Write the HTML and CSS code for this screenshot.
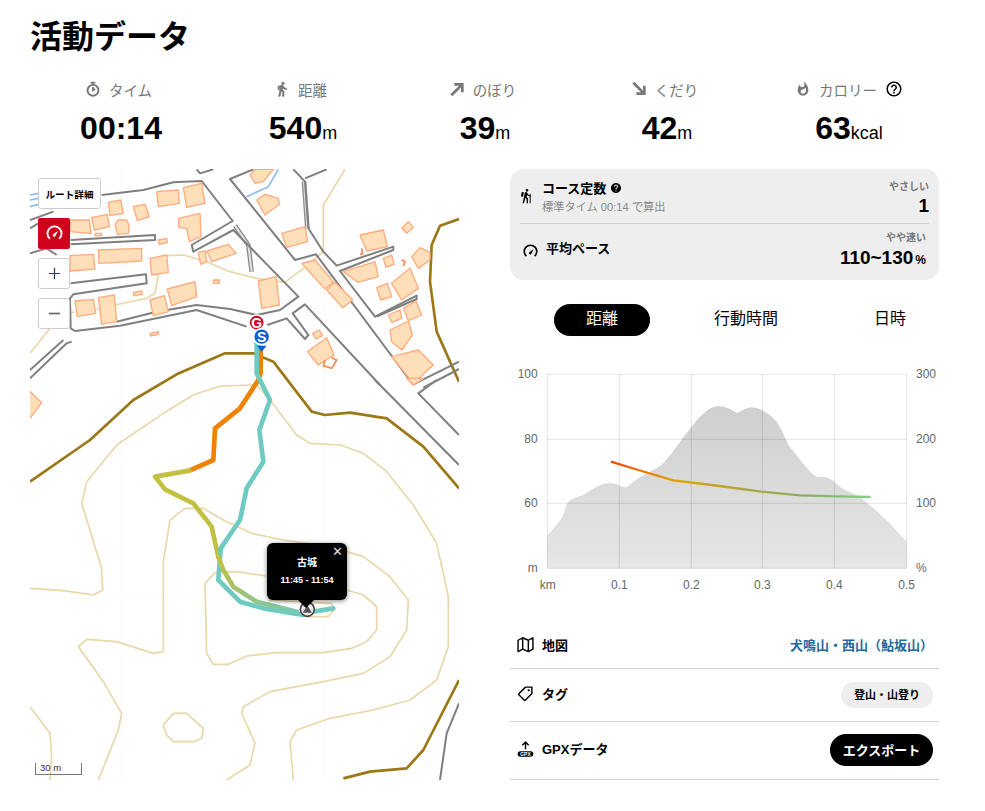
FILE: index.html
```html
<!DOCTYPE html>
<html lang="ja">
<head>
<meta charset="utf-8">
<title>活動データ</title>
<link rel="stylesheet" href="styles.css">
</head>
<body>
<main class="page">
  <h1 class="title">活動データ</h1>
  <section class="stats">
    <div class="stat">
      <div class="stat-label"><svg class="ic" viewBox="0 0 24 24"><path class="ic-line" d="M8.5 2.5h7M12 2.5v4M12 9v5l3-2"/><circle class="ic-line" cx="12" cy="14" r="8.2"/></svg><span>タイム</span></div>
      <div class="stat-value">00:14</div>
    </div>
    <div class="stat">
      <div class="stat-label"><svg class="ic" viewBox="0 0 24 24"><path class="ic-fill ic-bold" d="M13.5 5.5c1.1 0 2-.9 2-2s-.9-2-2-2-2 .9-2 2 .9 2 2 2zM9.8 8.9L7 23h2.1l1.8-8 2.1 2v6h2v-7.5l-2.1-2 .6-3C14.8 12 16.8 13 19 13v-2c-1.9 0-3.5-1-4.3-2.4l-1-1.6c-.4-.6-1-1-1.7-1-.3 0-.5.1-.8.1L6 8.3V13h2V9.6l1.8-.7"/></svg><span>距離</span></div>
      <div class="stat-value">540<small>m</small></div>
    </div>
    <div class="stat">
      <div class="stat-label"><svg class="ic" viewBox="0 0 24 24"><path class="ic-fill" d="M8 3h14v14h-4V9.8L5 23l-3-3L15 7H8z"/></svg><span>のぼり</span></div>
      <div class="stat-value">39<small>m</small></div>
    </div>
    <div class="stat">
      <div class="stat-label"><svg class="ic" viewBox="0 0 24 24"><path class="ic-fill" d="M8 21h14V7h-4v7.2L5 1 2 4l13 13H8z"/></svg><span>くだり</span></div>
      <div class="stat-value">42<small>m</small></div>
    </div>
    <div class="stat">
      <div class="stat-label stat-label-last"><svg class="ic" viewBox="0 0 24 24"><path class="ic-fill" d="M13.5.67s.74 2.65.74 4.8c0 2.06-1.35 3.73-3.41 3.73-2.07 0-3.63-1.67-3.63-3.73l.03-.36C5.21 7.51 4 10.62 4 14c0 4.42 3.58 8 8 8s8-3.58 8-8C20 8.61 17.41 3.8 13.5.67zM11.71 19c-1.78 0-3.22-1.4-3.22-3.14 0-1.62 1.05-2.76 2.81-3.12 1.77-.36 3.6-1.21 4.62-2.58.39 1.29.59 2.65.59 4.04 0 2.65-2.15 4.8-4.8 4.8z"/></svg><span>カロリー</span><svg class="ic-help" viewBox="0 0 24 24"><path d="M11 18h2v-2h-2v2zm1-16C6.48 2 2 6.48 2 12s4.48 10 10 10 10-4.48 10-10S17.52 2 12 2zm0 18c-4.41 0-8-3.59-8-8s3.59-8 8-8 8 3.59 8 8-3.59 8-8 8zm0-14c-2.21 0-4 1.79-4 4h2c0-1.1.9-2 2-2s2 .9 2 2c0 2-3 1.75-3 5h2c0-2.25 3-2.5 3-5 0-2.21-1.79-4-4-4z"/></svg></div>
      <div class="stat-value">63<small>kcal</small></div>
    </div>
  </section>

  <section class="columns">
    <div class="map">
      <svg class="map-svg" viewBox="0 0 1287 1833">
        <defs>
          <linearGradient id="fade" gradientUnits="userSpaceOnUse" x1="565" y1="530" x2="800" y2="695">
            <stop offset="0" stop-color="#c2c040"/><stop offset=".45" stop-color="#9cc47a"/><stop offset="1" stop-color="#74c9b4"/>
          </linearGradient>
        </defs>
        <path class="seam" d="M273 0V1833M885 0V1833M0 1288H1287"/>
        <g transform="translate(0,-12)">
          <g class="contour">
            <path d="M945 13L880 120V260L820 310L765 352L680 340L600 320L530 290L460 270L410 272"/>
            <path d="M385 330L375 385L350 400L255 420"/>
            <path d="M60 490L0 565"/>
            <path d="M120 442H135M197 432H205"/>
          </g>
          <path class="contour-main" d="M1287 162L1230 182L1205 240L1200 350L1220 500L1287 650"/>
          <g class="alley">
            <path d="M615 182L655 240L665 320"/>
            <path d="M822 50L832 190"/>
          </g>
          <g class="alley-in">
            <path d="M615 182L655 240L665 320"/>
            <path d="M822 50L832 190"/>
          </g>
          <path class="stream" d="M745 13L715 65L650 95M0 90L25 85M0 105L25 100M0 125L25 118"/>
          <g class="road">
            <path d="M215 90L340 75L430 52L515 48L608 168L485 240L490 260L610 195L805 395L750 435L680 450L600 432L500 420L380 440L260 470"/>
            <path d="M122 225L375 210L375 225L122 238"/>
            <path d="M122 355L348 328L350 355L130 388L120 400L122 490L135 498L270 482L500 435L650 485M712 480L770 460L825 522L835 510L788 445L825 418L1050 660"/>
            <path d="M670 13L600 42L795 285L858 268L1150 660"/>
            <path d="M790 13L825 50L835 190L880 260L920 302L1090 245L1090 255L930 318L1035 455L1160 392L1160 402L1040 455"/>
            <path d="M825 40L890 13M500 13L510 25L550 13"/>
            <path d="M0 165L70 140M0 190L25 175"/>
            <path d="M0 265L50 250L80 270"/>
            <path d="M0 640L110 535L125 530M0 615L100 525"/>
            <path d="M1150 658L1287 590M1180 668L1287 612"/>
          </g>
          <g class="bld">
            <path d="M380 80L445 75L448 115L385 125Z"/>
            <path d="M460 68L515 55L525 115L470 127Z"/>
            <path d="M445 160L510 145L513 215L478 230L470 190L447 188Z"/>
            <path d="M310 125L345 118L358 155L322 167Z"/>
            <path d="M235 112L272 105L280 145L240 152Z"/>
            <path d="M185 158L232 148L238 185L193 195Z"/>
            <path d="M255 178L265 165L290 165L297 180L295 205L262 208Z"/>
            <path d="M120 165L178 165L183 205L120 200Z"/>
            <path d="M205 255L335 250L335 288L207 295Z"/>
            <path d="M120 272L190 268L195 312L120 318Z"/>
            <path d="M360 280L410 270L415 322L365 330Z"/>
            <path d="M505 262L525 258L530 290L512 298Z"/>
            <path d="M530 258L595 238L618 265L545 290Z"/>
            <path d="M412 372L495 350L500 395L425 422Z"/>
            <path d="M360 405L403 392L415 440L370 452Z"/>
            <path d="M135 408L190 403L197 445L142 455Z"/>
            <path d="M205 398L253 390L260 470L215 478Z"/>
            <path d="M685 348L738 335L748 420L695 430Z"/>
            <path d="M755 205L825 185L833 230L770 247Z"/>
            <path d="M680 105L705 88L745 100L748 118L705 150Z"/>
            <path d="M660 30L675 13L730 13L700 50L675 55Z"/>
            <path d="M815 295L855 285L910 350L885 372Z"/>
            <path d="M890 375L915 352L968 405L938 428Z"/>
            <path d="M990 210L1060 195L1072 245L1010 258Z"/>
            <path d="M1115 190L1135 170L1150 187L1130 205Z"/>
            <path d="M1145 275L1170 248L1200 262L1200 285L1165 310Z"/>
            <path d="M1060 280L1085 270L1092 298L1068 306Z"/>
            <path d="M940 320L1035 290L1045 335L985 352Z"/>
            <path d="M1040 368L1072 355L1085 395L1052 405Z"/>
            <path d="M1085 355L1140 310L1165 370L1115 405Z"/>
            <path d="M1120 430L1158 408L1175 450L1135 467Z"/>
            <path d="M1075 450L1110 435L1115 460L1085 472Z"/>
            <path d="M1080 495L1135 468L1147 510L1115 555L1085 530Z"/>
            <path d="M1085 575L1165 555L1210 600L1150 655Z"/>
            <path d="M832 560L890 518L912 570L865 600Z"/>
            <path d="M848 505L868 495L878 512L858 522Z"/>
            <path d="M310 382L335 378L337 388L312 392Z"/>
            <path d="M550 345L568 345L568 355L550 355Z"/>
            <path d="M360 505L385 500L385 508L362 513Z"/>
            <path d="M385 225L410 220L412 232L388 238Z"/>
            <path d="M195 205L215 205L215 212L195 212Z"/>
          </g>
          <path class="bld-line" d="M885 585L880 602L905 610L920 585L905 578M1115 285L1125 290L1120 303M995 250L998 266L990 268"/>
        </g>
        <g transform="translate(0,633)">
          <g class="contour">
            <path d="M0 625L100 632L190 645L218 630L215 565L155 370L170 305L260 195L400 100L490 45L570 18L680 15L720 60L800 165L840 190L930 195L1000 220L1070 275L1150 375L1220 490L1255 650V800L1220 900L1140 960L1030 990L900 1015L800 1050L780 1085L790 1200"/>
            <path d="M205 1200L265 1050L275 1000L220 905L145 800L170 778L260 785L370 820L400 815V545L420 420L465 385L520 385L580 420L665 460L760 480L900 500L1000 530L1080 590L1135 660L1130 750L1080 830L1000 880L880 905L720 935L640 980L635 1000L675 1090L660 1155L590 1200"/>
            <path d="M720 590L620 575L555 578L525 610L530 820L550 853H595L650 828L740 818H880L965 805L1010 785L1040 750V680L1000 645L950 630"/>
            <path d="M715 660L905 670L912 690L895 710H830"/>
            <path d="M430 1000H470L520 1045L515 1075L490 1085H430L410 1065L400 1035Z"/>
            <path d="M0 980L60 1060L65 1130L60 1200"/>
          </g>
          <path class="contour-main" d="M0 305L180 180L310 60L440 -17L585 -80H670L730 -55L845 95L885 105L960 98L1070 115L1180 200L1287 325"/>
          <path class="contour-main" d="M940 1195L1020 1175L1130 1165L1180 1110L1287 900"/>
          <g class="road">
            <path d="M1035 0L1287 255M1220 0L1165 40L1287 165"/>
            <path d="M1287 970L1250 1060L1230 1200"/>
          </g>
          <g class="bld">
            <path d="M-10 25L35 68L0 115H-10Z"/>
            <path d="M1130 -5H1180L1150 15Z"/>
          </g>
          <path class="track track-orange" d="M692 -100V-20L685 0L630 85L555 145L550 240L478 272"/>
          <path class="track track-yellow" d="M478 272L375 290L405 328L490 370L545 440L565 530"/>
          <path class="track track-teal" d="M680 -115V-20L720 60L688 150L700 245L650 325L630 420L572 505L565 600L630 665L700 685L820 705M850 695L910 685"/>
          <path class="track track-fade" d="M565 530L580 570L610 620L680 665L800 695"/>
          <circle class="peak" cx="832" cy="688" r="21"/>
          <path class="peak-mark" d="M818 698L832 676L846 698Z"/>
        </g>
        <g class="pin">
          <circle class="pin-g" cx="680" cy="461" r="23"/>
          <text class="pin-text" x="680" y="476">G</text>
          <path class="pin-tail-s" d="M680 530L710 530L695 548Z"/>
          <circle class="pin-s" cx="695" cy="503" r="24"/>
          <text class="pin-text" x="695" y="518">S</text>
        </g>
      </svg>

      <div class="map-controls">
        <button class="ctl ctl-route">ルート詳細</button>
        <button class="ctl ctl-red"><svg class="ctl-gauge" viewBox="0 0 24 24"><path class="gauge-line" d="M5.5 19.5A10 10 0 1 1 18.5 19.5"/><path class="gauge-needle" d="M17 8L10.6 12.8A2 2 0 1 0 13.4 15.4Z"/></svg></button>
        <button class="ctl ctl-zoom"><svg viewBox="0 0 16 16" class="zoom-ic"><path d="M8 1V15M1 8H15"/></svg></button>
        <button class="ctl ctl-zoom"><svg viewBox="0 0 16 16" class="zoom-ic zoom-minus"><path d="M1 8H15"/></svg></button>
      </div>

      <div class="popup">
        <span class="popup-close">✕</span>
        <div class="popup-name">古城</div>
        <div class="popup-time">11:45 - 11:54</div>
      </div>
      <div class="scale">30 m</div>
    </div>

    <div class="side">
      <div class="card">
        <div class="card-row card-row-course">
          <svg class="card-ic" viewBox="0 0 24 24"><path d="M13.5 5.5c1.1 0 2-.9 2-2s-.9-2-2-2-2 .9-2 2 .9 2 2 2zM17.5 10.78c-1.23-.37-2.22-1.17-2.8-2.18l-1-1.6c-.41-.65-1.11-1-1.84-1-.78 0-1.59.5-1.78 1.44S7 23 7 23h2.1l1.8-8 2.1 2v6h2v-7.5l-2.1-2 .6-3c1 1.15 2.41 2.01 4 2.34V23H19V9h-1.5v1.78zM7.43 13.13l-2.12-.41c-.54-.11-.9-.63-.79-1.17l.76-3.93c.21-1.08 1.26-1.79 2.34-1.58l1.16.23-1.35 6.86z"/></svg>
          <div class="card-main">
            <div class="card-title">コース定数<svg class="card-help" viewBox="0 0 24 24"><path d="M12 2C6.48 2 2 6.48 2 12s4.48 10 10 10 10-4.48 10-10S17.52 2 12 2zm1 17h-2v-2h2v2zm2.07-7.75l-.9.92C13.45 12.9 13 13.5 13 15h-2v-.5c0-1.1.45-2.1 1.17-2.83l1.24-1.26c.37-.36.59-.86.59-1.41 0-1.1-.9-2-2-2s-2 .9-2 2H8c0-2.21 1.79-4 4-4s4 1.79 4 4c0 .88-.36 1.68-.93 2.25z"/></svg></div>
            <div class="card-sub">標準タイム 00:14 で算出</div>
          </div>
          <div class="card-right">
            <div class="card-hint">やさしい</div>
            <div class="card-num">1</div>
          </div>
        </div>
        <div class="card-row card-row-pace">
          <svg class="card-ic card-ic-gauge" viewBox="0 0 24 24"><path class="gauge-dark" d="M5.5 19.5A10 10 0 1 1 18.5 19.5"/><path d="M17 8L10.6 12.8A2 2 0 1 0 13.4 15.4Z"/></svg>
          <div class="card-main"><div class="card-title">平均ペース</div></div>
          <div class="card-right">
            <div class="card-hint">やや速い</div>
            <div class="card-num">110~130<small>%</small></div>
          </div>
        </div>
      </div>

      <nav class="tabs">
        <span class="tab tab-active">距離</span>
        <span class="tab">行動時間</span>
        <span class="tab">日時</span>
      </nav>

      <svg class="chart" viewBox="0 0 1320 720">
        <defs>
          <linearGradient id="elev" x1="0" y1="0" x2="0" y2="1">
            <stop offset="0" stop-color="#cfcfcf"/><stop offset="1" stop-color="#e6e6e6"/>
          </linearGradient>
          <linearGradient id="pace" gradientUnits="userSpaceOnUse" x1="318" y1="0" x2="1097" y2="0">
            <stop offset="0" stop-color="#f2460a"/><stop offset=".24" stop-color="#e0a200"/><stop offset=".5" stop-color="#b0a533"/><stop offset=".75" stop-color="#86ae62"/><stop offset="1" stop-color="#84d088"/>
          </linearGradient>
        </defs>
        <path class="elev" d="M127 527L150 500L168 478L177 460L185 432L195 420L210 413L235 405L255 392L275 380L295 372L315 369L335 373L350 380L365 382L380 370L400 355L435 335L470 315L500 280L540 225L580 175L610 148L625 141L640 138L655 140L670 145L697 159L715 149L735 142L755 144L770 150L795 165L815 185L830 210L850 255L890 305L915 335L935 351L965 352L985 362L1010 385L1060 408L1100 440L1150 485L1205 545V625H127Z"/>
        <path class="grid" d="M127 43H1205M127 238H1205M127 430H1205M127 625H1205M127 43V625M343 43V625M559 43V625M772 43V625M988 43V625M1205 43V625"/>
        <path class="pace" d="M318 305L400 330L505 361L620 375L770 395L885 406L1000 409L1097 411"/>
        <g class="axis">
          <text class="end" x="98" y="53">100</text>
          <text class="end" x="98" y="248">80</text>
          <text class="end" x="98" y="440">60</text>
          <text class="end" x="98" y="635">m</text>
          <text x="1233" y="53">300</text>
          <text x="1233" y="248">200</text>
          <text x="1233" y="440">100</text>
          <text x="1233" y="635">%</text>
          <text class="mid" x="128" y="687">km</text>
          <text class="mid" x="343" y="687">0.1</text>
          <text class="mid" x="559" y="687">0.2</text>
          <text class="mid" x="772" y="687">0.3</text>
          <text class="mid" x="988" y="687">0.4</text>
          <text class="mid" x="1205" y="687">0.5</text>
        </g>
      </svg>

      <div class="info info-map">
        <div class="info-label"><svg class="info-ic" viewBox="0 0 24 24"><path class="info-line" d="M1.5 6V22L8 18.5L16 22L22.5 18.5V2.5L16 6L8 2.5ZM8 2.5V18.5M16 6V22"/></svg>地図</div>
        <a class="info-link">犬鳴山・西山（鮎坂山）</a>
      </div>
      <div class="info info-tag">
        <div class="info-label"><svg class="info-ic" viewBox="0 0 24 24"><path class="info-line" d="M2.6 12.3L12 3H21V12L11.7 21.4A1 1 0 0 1 10.3 21.4L2.6 13.7A1 1 0 0 1 2.6 12.3Z"/><circle cx="16.5" cy="7.5" r="1.6"/></svg>タグ</div>
        <span class="chip">登山・山登り</span>
      </div>
      <div class="info info-gpx">
        <div class="info-label"><svg class="info-ic" viewBox="0 0 24 24"><path class="info-line" d="M12 13V3M7.5 7.5L12 3L16.5 7.5"/><rect x="1" y="16" width="22" height="7.5" rx="3.7"/><text class="gpx-text" x="12" y="22.3">GPX</text></svg>GPXデータ</div>
        <button class="export">エクスポート</button>
      </div>
    </div>
  </section>
</main>
</body>
</html>
```

FILE: styles.css
```css
* { box-sizing: border-box; }
html, body { margin: 0; padding: 0; background: #fff; }
body {
  font-family: "Liberation Sans", "Noto Sans CJK JP", sans-serif;
  color: #000;
}
.page { width: 985px; height: 811px; padding: 18px 45px 0 30px; overflow: hidden; }
.title { margin: 0; font-size: 32px; line-height: 38px; font-weight: 700; }

.stats { display: grid; grid-template-columns: repeat(5, 182px); margin-top: 22px; }
.stat { display: flex; flex-direction: column; align-items: center; }
.stat-label { display: flex; align-items: center; gap: 8px; height: 22px; padding-right: 5px; font-size: 14.5px; color: #777; }
.stat-label-last { padding-right: 0; }
.ic { width: 16px; height: 16px; }
.ic-line { fill: none; stroke: #777; stroke-width: 2.8; }
.ic-fill { fill: #777; }
.ic-bold { stroke: #777; stroke-width: 1; }
.ic-help { width: 18px; height: 18px; fill: #000; }
.stat-value { margin-top: 9px; font-size: 32px; line-height: 38px; font-weight: 700; }
.stat-value small { font-size: 18px; font-weight: 400; }

.columns { display: flex; gap: 51px; margin-top: 17px; }

.map { position: relative; width: 429px; height: 611px; border-radius: 12px; overflow: hidden; flex: none; background: #fff; }
.map-svg { display: block; width: 429px; height: 611px; }
.seam { fill: none; stroke: #fafafa; stroke-width: 3; }
.contour path { fill: none; stroke: #e9d7aa; stroke-width: 5; stroke-linejoin: round; }
.contour-main { fill: none; stroke: #9c7716; stroke-width: 8; stroke-linejoin: round; }
.road path { fill: none; stroke: #7f7f7f; stroke-width: 6; stroke-linejoin: round; }
.alley path { fill: none; stroke: #8c8c8c; stroke-width: 14; }
.alley-in path { fill: none; stroke: #e4e4e4; stroke-width: 6; }
.stream { fill: none; stroke: #8cbcf0; stroke-width: 5; }
.bld path { fill: #ffdfb9; stroke: #ffab7c; stroke-width: 4; stroke-linejoin: round; }
.bld-line { fill: none; stroke: #f58a52; stroke-width: 5; }
.track { fill: none; stroke-width: 14; stroke-linejoin: round; stroke-linecap: round; }
.track-orange { stroke: #ef8200; }
.track-yellow { stroke: #c2c040; }
.track-teal { stroke: #6fcac1; }
.track-fade { stroke: url(#fade); }
.peak { fill: #e9e9e9; stroke: #444; stroke-width: 5; }
.peak-mark { fill: #555; }
.pin-g { fill: #cf0a2c; stroke: #fff; stroke-width: 5; }
.pin-s { fill: #0d5fd3; stroke: #fff; stroke-width: 5; }
.pin-tail-s { fill: #0d5fd3; }
.pin-text { font-size: 42px; font-weight: 700; fill: #fff; text-anchor: middle; }

.map-controls { position: absolute; left: 8px; top: 9px; display: flex; flex-direction: column; align-items: flex-start; gap: 9px; }
.ctl { display: flex; align-items: center; justify-content: center; padding: 0; background: #fff; border: 1px solid #ccc; border-radius: 3px; font-family: inherit; color: #000; }
.ctl-route { width: 63px; height: 31px; font-size: 9.6px; font-weight: 700; white-space: nowrap; }
.ctl-red { width: 32px; height: 31px; background: #d0021b; border: none; border-radius: 2px; }
.ctl-gauge { width: 17px; height: 17px; }
.gauge-line { fill: none; stroke: #fff; stroke-width: 2.6; }
.gauge-needle { fill: #fff; }
.ctl-zoom { width: 32px; height: 31px; }
.zoom-ic { width: 13px; height: 13px; }
.zoom-ic path { fill: none; stroke: #2c3e5c; stroke-width: 1.5; }
.zoom-minus path { stroke: #666; stroke-width: 2; }

.popup { position: absolute; left: 237px; top: 374px; width: 80px; height: 57px; background: #000; border-radius: 6px; color: #fff; text-align: center; box-shadow: 0 1px 5px rgba(0,0,0,.5); font-weight: 700; }
.popup::after { content: ""; position: absolute; left: 31px; top: 57px; border: 8px solid transparent; border-top: 8px solid #000; border-bottom: 0; }
.popup-close { position: absolute; right: 4px; top: 2px; font-size: 13px; line-height: 14px; color: #ddd; font-weight: 400; }
.popup-name { margin-top: 13px; font-size: 10px; line-height: 14px; }
.popup-time { margin-top: 4px; font-size: 9px; line-height: 13px; }

.scale { position: absolute; left: 5px; bottom: 5px; width: 47px; height: 12px; border: 1px solid #777; border-top: none; font-size: 9.5px; line-height: 10px; padding-left: 4px; color: #333; }

.side { width: 429px; flex: none; }
.card { background: #eee; border-radius: 14px; height: 111px; padding: 0 10px; }
.card-row { display: flex; align-items: center; }
.card-row-course { height: 55px; border-bottom: 1px solid #d2d2d2; }
.card-row-pace { height: 56px; }
.card-ic { width: 16px; height: 18px; margin-right: 8px; flex: none; margin-left: -2px; }
.card-ic-gauge { width: 15px; height: 15px; margin: 0 8px 2px 3px; }
.gauge-dark { fill: none; stroke: #000; stroke-width: 2.6; }
.card-main { flex: 1; }
.card-title { display: flex; align-items: center; gap: 4px; font-size: 13px; line-height: 17px; font-weight: 700; }
.card-row-course .card-title { margin-top: 1px; }
.card-row-pace .card-title { margin-top: -7px; }
.card-help { width: 12px; height: 12px; }
.card-sub { font-size: 11.2px; line-height: 14px; margin-top: 3px; color: #888; }
.card-right { text-align: right; }
.card-hint { font-size: 10px; line-height: 12px; color: #777; font-weight: 700; }
.card-num { font-size: 19px; line-height: 22px; font-weight: 700; margin-top: 2px; }
.card-row-course .card-right { margin-top: 5px; }
.card-row-pace .card-right { margin-top: -2px; padding-right: 3px; }
.card-row-pace .card-num { margin-top: 3px; }
.card-num small { font-size: 12px; margin-left: 2px; }

.tabs { display: flex; gap: 48px; padding-left: 44px; margin-top: 24px; }
.tab { width: 96px; height: 32px; line-height: 30px; border-radius: 16px; text-align: center; font-size: 16px; white-space: nowrap; }
.tab-active { background: #000; color: #fff; }

.chart { display: block; width: 440px; height: 240px; margin: 24px 0 -10px -5px; }
.grid { fill: none; stroke: rgba(0,0,0,.11); stroke-width: 3; }
.elev { fill: url(#elev); }
.pace { fill: none; stroke: url(#pace); stroke-width: 7; stroke-linejoin: round; }
.axis text { font-size: 36px; fill: #666; }
.axis .end { text-anchor: end; }
.axis .mid { text-anchor: middle; }

.info { display: flex; align-items: center; justify-content: space-between; border-bottom: 1px solid #d2d2d2; padding-left: 7px; }
.info-map { height: 49px; margin-top: 30px; padding-right: 6px; }
.info-tag { height: 53px; padding-right: 6px; }
.info-gpx { height: 58px; padding-right: 6px; }
.info-label { display: flex; align-items: center; gap: 8px; font-size: 13px; font-weight: 700; }
.info-tag .info-label { margin-bottom: 3px; }
.info-gpx .info-label { margin-bottom: 4px; }
.info-ic { width: 17px; height: 17px; flex: none; }
.info-line { fill: none; stroke: #000; stroke-width: 2; stroke-linejoin: round; }
.gpx-text { font-size: 7px; font-weight: 700; fill: #fff; text-anchor: middle; }
.info-link { font-size: 13px; font-weight: 700; color: #1f6a9e; }
.chip { display: block; height: 26px; line-height: 26px; padding: 0 13px; background: #eee; border-radius: 13px; font-size: 11px; font-weight: 700; }
.export { width: 103px; height: 32px; padding: 0; margin-bottom: 2px; border: none; border-radius: 16px; background: #000; color: #fff; font-family: inherit; font-size: 13px; font-weight: 700; }
```
